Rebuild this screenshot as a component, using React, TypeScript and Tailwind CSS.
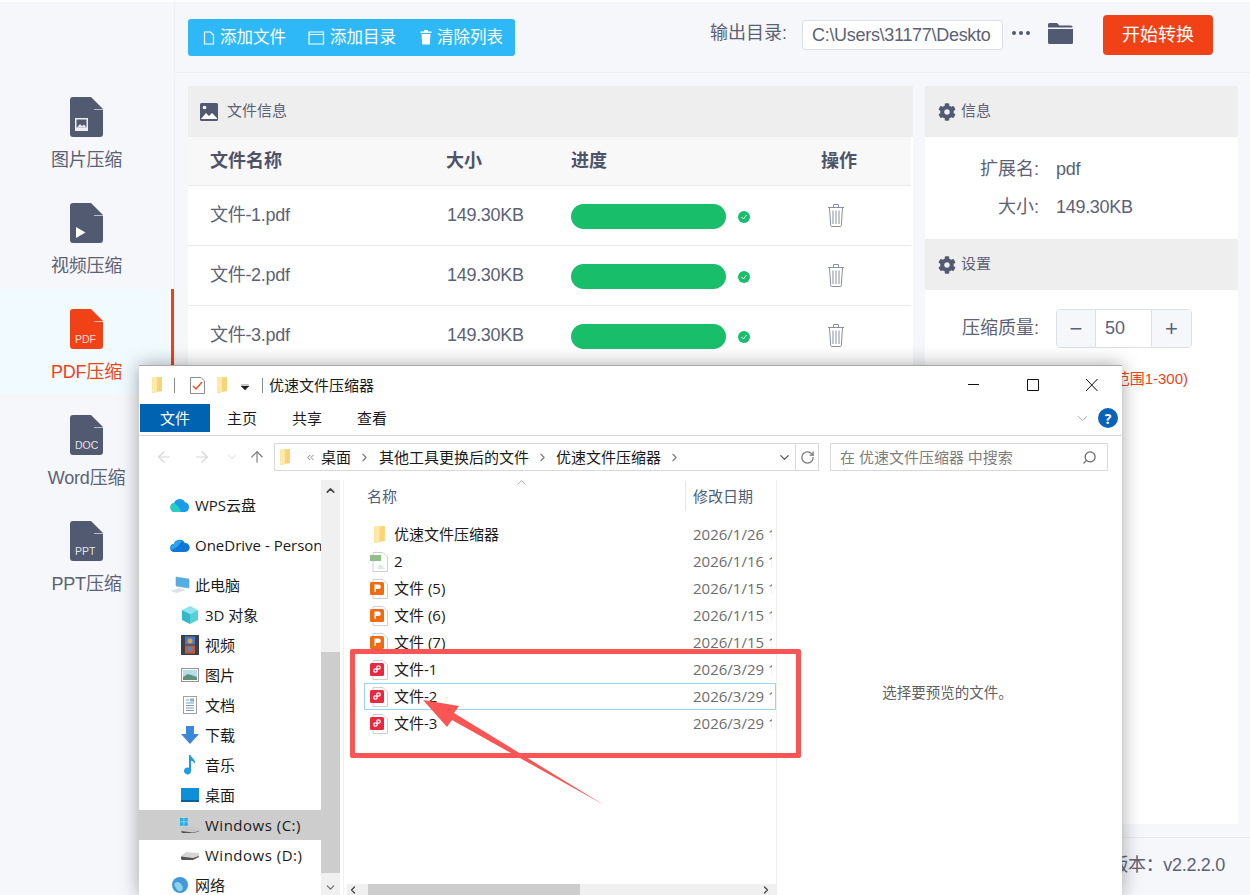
import React from 'react';
import { ArrowLeft, ArrowRight, ArrowUp, ChevronDown, ChevronLeft, ChevronRight, ChevronUp, ChevronsLeft, RotateCw, Search } from 'lucide-react';
import { FaCog } from 'react-icons/fa';

const APP_FONT = 'font-["Liberation_Sans","Noto_Sans_CJK_SC",sans-serif]';
const WIN_FONT = 'font-["Open_Sans","Noto_Sans_CJK_SC",sans-serif]';

function FileShape({ color, children }: { color: string; children?: React.ReactNode }) {
  return (
    <svg width="36" height="40" viewBox="0 0 36 40">
      <path
        d="M5 0H23L35 12V37a3 3 0 0 1-3 3H5a3 3 0 0 1-3-3V3a3 3 0 0 1 3-3Z"
        fill={color}
      />
      <path d="M26 12.5H35" stroke="#fff" strokeOpacity="0.6" strokeWidth="1" />
      {children}
    </svg>
  );
}

function SideLabelIcon({ label, color }: { label: string; color: string }) {
  return (
    <FileShape color={color}>
      <text x="7" y="34" fontSize="10.5" fill="#fff" fillOpacity="0.85" fontFamily="Liberation Sans, sans-serif">
        {label}
      </text>
    </FileShape>
  );
}

const sideItems = [
  {
    name: '图片压缩',
    icon: (
      <FileShape color="#525a72">
        <rect x="7" y="21" width="13" height="13" fill="#fff" fillOpacity="0.9" />
        <rect x="8.500" y="22.500" width="10" height="8" fill="#525a72" />
        <path d="M9 30.500l3-3.500 2 2 2-1.500 2.500 3Z" fill="#fff" fillOpacity="0.85" />
      </FileShape>
    ),
  },
  {
    name: '视频压缩',
    icon: (
      <FileShape color="#525a72">
        <path d="M8 24L17.5 29.5L8 35Z" fill="#fff" />
      </FileShape>
    ),
  },
  { name: 'PDF压缩', active: true, icon: <SideLabelIcon label="PDF" color="#f14217" /> },
  { name: 'Word压缩', icon: <SideLabelIcon label="DOC" color="#525a72" /> },
  { name: 'PPT压缩', icon: <SideLabelIcon label="PPT" color="#525a72" /> },
];

function Sidebar() {
  return (
    <div className="w-[175px] shrink-0 border-r border-[#eef0f3] pt-[75px]">
      {sideItems.map((item) => (
        <div
          key={item.name}
          className={`h-[106px] pt-[20px] flex flex-col items-center ${
            item.active ? 'bg-[#f0faff] border-r-[3px] border-[#f14217] text-[#f14217]' : 'text-[#5b6277] pr-[3px]'
          }`}
        >
          {item.icon}
          <span className="text-[18px] leading-[24px] mt-[11px] ml-[2px] tracking-[-0.2px]">{item.name}</span>
        </div>
      ))}
    </div>
  );
}

function TopBar() {
  return (
    <div className="h-[71px] border-b border-[#eceef1] flex items-center pl-[13px] pr-[37px] pb-[4px]">
      <div className="h-[37px] w-[327px] mt-[5px] bg-[#2fb8f8] rounded-[3px] text-white text-[16.5px] flex items-center pl-[15px]">
        <svg width="12" height="14" viewBox="0 0 12 14" fill="none" stroke="#fff" strokeWidth="1.2" className="mr-[5px]">
          <path d="M1.5 1h6l3 3v9h-9Z" />
        </svg>
        <span>添加文件</span>
        <svg width="17" height="14" viewBox="0 0 17 14" fill="none" stroke="#fff" strokeWidth="1.2" className="ml-[22px] mr-[5px]">
          <path d="M1 1h14.5v12H1ZM1 3.5h14.5" />
        </svg>
        <span>添加目录</span>
        <svg width="12" height="15" viewBox="0 0 12 15" fill="#fff" className="ml-[24px] mr-[5px]">
          <path d="M4 0h4v1.5h3.5v1.500h-11V1.5H4ZM1.5 4h9l-.7 10.500H2.200Z" />
        </svg>
        <span>清除列表</span>
      </div>
      <span className="ml-auto text-[18px] text-[#5b6277] mb-[3px]">输出目录:</span>
      <div className="ml-[15px] w-[201px] h-[30px] bg-white border border-[#dcdfe6] rounded-[3px] px-[9px] flex items-center text-[18px] tracking-[-0.3px] text-[#5b6277] overflow-hidden whitespace-nowrap">
        C:\Users\31177\Deskto
      </div>
      <span className="flex gap-[3px] ml-[9px] mb-[4px]">
        <i className="w-[4px] h-[4px] rounded-full bg-[#525a72]" />
        <i className="w-[4px] h-[4px] rounded-full bg-[#525a72]" />
        <i className="w-[4px] h-[4px] rounded-full bg-[#525a72]" />
      </span>
      <svg width="25" height="21" viewBox="0 0 25 21" className="ml-[18px] mb-[3px]">
        <path d="M0 1.5A1.5 1.5 0 0 1 1.5 0H9l2.5 2.5H23A1.5 1.5 0 0 1 24.5 4v.5H0Z" fill="#525a72" />
        <path d="M0 6h25v13.5a1.5 1.5 0 0 1-1.5 1.5h-22A1.5 1.5 0 0 1 0 19.5Z" fill="#525a72" />
      </svg>
      <div className="ml-[30px] w-[110px] h-[40px] bg-[#f14217] rounded-[4px] text-white text-[18px] flex items-center justify-center">
        开始转换
      </div>
    </div>
  );
}

function PanelTitle({ icon, title }: { icon: React.ReactNode; title: string }) {
  return (
    <div className="h-[51px] bg-[#eeeeee] flex items-center pl-[13px] text-[15px] text-[#5b6277]">
      {icon}
      <span>{title}</span>
    </div>
  );
}

function TrashIcon() {
  return (
    <svg width="18" height="24" viewBox="0 0 18 24" fill="none" stroke="#8a90a2" strokeWidth="1">
      <path d="M1 4.5h16M6.5 4V1.5h5V4M2.5 5l1.2 17.5a1 1 0 0 0 1 1h8.6a1 1 0 0 0 1-1L15.500 5M6 7.500v13.500M9 7.500v13.500M12 7.500v13.500" />
    </svg>
  );
}

function FilePanel() {
  return (
    <div className="w-[725px] bg-white">
      <PanelTitle
        title="文件信息"
        icon={
          <svg width="18" height="18" viewBox="0 0 18 18" className="mr-[9px] -ml-[1px]">
            <rect width="18" height="18" rx="1.500" fill="#525a72" />
            <circle cx="4.500" cy="4.500" r="1.800" fill="#fff" />
            <path d="M1 16l5-6 3 3 3-3 5 5v1Z" fill="#fff" />
          </svg>
        }
      />
      <div className="w-[723px]">
        <div className="h-[49px] bg-[#f8f8f9] border-b border-[#e8eaec] flex items-center text-[18px] font-bold text-[#4d5368] pl-[22px]">
          <span className="w-[236px]">文件名称</span>
          <span className="w-[125px]">大小</span>
          <span className="w-[250px]">进度</span>
          <span>操作</span>
        </div>
        {['文件-1.pdf', '文件-2.pdf', '文件-3.pdf'].map((name) => (
          <div key={name} className="h-[60px] border-b border-[#e8eaec] flex items-center text-[18px] tracking-[-0.3px] text-[#5b6277] pl-[22px]">
            <span className="w-[236px]">{name}</span>
            <span className="w-[125px] pl-px">149.30KB</span>
            <span className="w-[155px] h-[25px] rounded-full bg-[#19be6b] mt-[2px]" />
            <span className="w-[12px] h-[12px] ml-[12px] mt-[2px] rounded-full bg-[#19be6b] flex items-center justify-center">
              <svg width="8" height="8" viewBox="0 0 8 8" fill="none" stroke="#fff" strokeWidth="1">
                <path d="M1.500 4l2 2 3-4" />
              </svg>
            </span>
            <span className="ml-[77px] -mt-[2px]">
              <TrashIcon />
            </span>
          </div>
        ))}
      </div>
    </div>
  );
}

function InfoPanel() {
  return (
    <div className="w-[313px] bg-white text-[18px] text-[#5b6277]">
      <PanelTitle title="信息" icon={<FaCog className="text-[#525a72] text-[18px] mr-[5px]" />} />
      <div className="h-[102px] pt-[13px]">
        <div className="flex h-[38px] items-center">
          <span className="w-[114px] text-right">扩展名:</span>
          <span className="ml-[17px] tracking-[-0.3px]">pdf</span>
        </div>
        <div className="flex h-[38px] items-center">
          <span className="w-[114px] text-right">大小:</span>
          <span className="ml-[17px] tracking-[-0.3px]">149.30KB</span>
        </div>
      </div>
      <PanelTitle title="设置" icon={<FaCog className="text-[#525a72] text-[18px] mr-[5px]" />} />
      <div className="h-[534px] pt-[19px]">
        <div className="flex items-center">
          <span className="w-[114px] text-right">压缩质量:</span>
          <div className="ml-[17px] w-[136px] h-[39px] border border-[#dcdfe6] rounded-[4px] flex overflow-hidden">
            <span className="w-[39px] bg-[#f5f7fa] border-r border-[#dcdfe6] flex items-center justify-center text-[22px] leading-none">−</span>
            <span className="flex-1 pl-[9px] flex items-center">50</span>
            <span className="w-[40px] bg-[#f5f7fa] border-l border-[#dcdfe6] flex items-center justify-center text-[22px] leading-none">+</span>
          </div>
        </div>
        <div className="text-[15px] text-[#f14217] text-right pr-[50px] mt-[20px]">(范围1-300)</div>
      </div>
    </div>
  );
}

function Folder({ w = 12, h = 16 }: { w?: number; h?: number }) {
  return (
    <svg width={w} height={h} viewBox="0 0 12 16">
      <path d="M1 0h10v13.500L1 16Z" fill="#ffe29c" />
      <path d="M1 1.500L11 0v14L1 16Z" fill="#f8d477" />
      <path d="M1 0h5v15.200L1 16Z" fill="#fde9a8" />
    </svg>
  );
}

function DocBase({ children }: { children: React.ReactNode }) {
  return (
    <svg width="18" height="20" viewBox="0 0 18 20">
      <path d="M3 .5H13L17.500 5V19.500H3Z" fill="#fff" stroke="#cfcfcf" />
      {children}
    </svg>
  );
}

function PptIcon() {
  return (
    <DocBase>
      <rect x="0" y="3" width="14" height="13" rx="1.500" fill="#ef6c13" />
      <path d="M4.500 5.500h4a2.300 2.300 0 0 1 0 4.600H6v2.900H4.500Z" fill="#fff" />
    </DocBase>
  );
}

function RedIcon() {
  return (
    <DocBase>
      <rect x="0" y="3" width="14" height="13" rx="1.500" fill="#e8283f" />
      <circle cx="8.500" cy="7.500" r="1.700" fill="none" stroke="#fff" strokeWidth="1.300" />
      <circle cx="5.500" cy="10.500" r="1.700" fill="none" stroke="#fff" strokeWidth="1.300" />
    </DocBase>
  );
}

function PngIcon() {
  return (
    <DocBase>
      <rect x="0" y="3" width="11" height="6" fill="#8fbf86" />
      <path d="M7 17l3-5 5 5Z" fill="#dcebd8" />
    </DocBase>
  );
}

const files = [
  { name: '优速文件压缩器', date: '2026/1/26 1', icon: <span className="pl-[3px] block"><Folder w={13} h={17} /></span> },
  { name: '2', date: '2026/1/16 1', icon: <PngIcon /> },
  { name: '文件 (5)', date: '2026/1/15 1', icon: <PptIcon /> },
  { name: '文件 (6)', date: '2026/1/15 1', icon: <PptIcon /> },
  { name: '文件 (7)', date: '2026/1/15 1', icon: <PptIcon /> },
  { name: '文件-1', date: '2026/3/29 1', icon: <RedIcon /> },
  { name: '文件-2', date: '2026/3/29 1', icon: <RedIcon />, selected: true },
  { name: '文件-3', date: '2026/3/29 1', icon: <RedIcon /> },
];

const navIcons: Record<string, React.ReactNode> = {
  wps: (
    <svg width="20" height="14" viewBox="0 0 20 14">
      <path d="M5 14a4.500 4.500 0 0 1-1-8.900A6 6 0 0 1 15 4.200 5 5 0 0 1 15 14Z" fill="#1c9be8" />
      <path d="M5 14a4.500 4.500 0 0 1-1-8.900C6 6 9 9 11 14Z" fill="#27cfc0" />
    </svg>
  ),
  onedrive: (
    <svg width="20" height="13" viewBox="0 0 20 13">
      <path d="M4.500 13a4 4 0 0 1-.7-8A6 6 0 0 1 14.800 4 4.500 4.500 0 0 1 15.500 13Z" fill="#0f78d4" />
      <path d="M3.800 5A6 6 0 0 1 12 2L7 8 1.500 11A4 4 0 0 1 3.800 5Z" fill="#28a8ea" />
    </svg>
  ),
  pc: (
    <svg width="20" height="18" viewBox="0 0 20 18">
      <path d="M6 1l13 2v9L6 10Z" fill="#4fb0e8" stroke="#7f9fb4" strokeWidth="0.600" />
      <path d="M0 15l9-3 7 2-9 3Z" fill="#dfe3e6" />
    </svg>
  ),
  cube: (
    <svg width="18" height="18" viewBox="0 0 18 18">
      <path d="M9 0l8 4-8 4-8-4Z" fill="#8fe3ee" />
      <path d="M1 4l8 4v10l-8-4Z" fill="#2fb9c9" />
      <path d="M17 4L9 8v10l8-4Z" fill="#57cfdb" />
    </svg>
  ),
  film: (
    <svg width="18" height="20" viewBox="0 0 18 20">
      <rect width="18" height="20" fill="#3c4048" />
      <rect x="4" y="1.500" width="10" height="8" fill="#4a78c8" />
      <rect x="4" y="10.500" width="10" height="8" fill="#c7583a" />
      <circle cx="9" cy="6" r="2.500" fill="#e2a23a" />
      <circle cx="9" cy="14" r="2.500" fill="#4a8ec8" />
    </svg>
  ),
  picture: (
    <svg width="18" height="14" viewBox="0 0 18 14">
      <rect x="0.500" y="0.500" width="17" height="13" fill="#fff" stroke="#8f959b" />
      <rect x="2" y="2" width="14" height="10" fill="#b6dcea" />
      <path d="M2 9l5-3 9 3v3H2Z" fill="#5f9079" />
    </svg>
  ),
  doc: (
    <svg width="14" height="18" viewBox="0 0 14 18" fill="none">
      <rect x="0.500" y="0.500" width="13" height="17" fill="#fff" stroke="#9aa0a6" />
      <path d="M3 4h3M3 7h8M3 9.500h8M3 12h8M3 14.500h8" stroke="#7d99b3" />
      <rect x="7" y="2.500" width="4" height="3" fill="#7db2d6" />
    </svg>
  ),
  download: (
    <svg width="18" height="18" viewBox="0 0 18 18">
      <path d="M5 0h8v8h5l-9 10L0 8h5Z" fill="#3a86d8" />
    </svg>
  ),
  music: (
    <svg width="12" height="20" viewBox="0 0 12 20">
      <path d="M5 0h1.600c.4 3 5.400 4 4.400 9C10 6.500 8 6 7 5.800V16a3.500 3.500 0 1 1-2-3.200Z" fill="#1e9be8" />
    </svg>
  ),
  desktop: (
    <svg width="18" height="14" viewBox="0 0 18 14">
      <rect width="18" height="14" fill="#0f8fd8" />
      <rect y="12" width="18" height="2" fill="#0a5f9c" />
    </svg>
  ),
  cdrive: (
    <svg width="20" height="15" viewBox="0 0 20 15">
      <path d="M0 0h3.500v3.500H0ZM4.300 0h3.500v3.500H4.300ZM0 4.300h3.500v3.500H0ZM4.300 4.300h3.500v3.500H4.300Z" fill="#17b3f0" />
      <path d="M1 11l5-2 13 1v3l-6 2H3l-2-1Z" fill="#c7c7c7" />
      <path d="M1 13l12 1.500 6-1.500v.5l-6 1.500H2Z" fill="#555" />
    </svg>
  ),
  ddrive: (
    <svg width="20" height="9" viewBox="0 0 20 9">
      <path d="M1 5l5-4 13 1v3l-6 3H3l-2-1Z" fill="#d5d5d5" />
      <path d="M1 5.500l12 1.500 6-2v1l-6 3H2l-1-1Z" fill="#555" />
    </svg>
  ),
  net: (
    <svg width="20" height="18" viewBox="0 0 20 18">
      <circle cx="10" cy="9" r="8" fill="#3f9ad6" />
      <path d="M4 8c3-3 5-2 7 0s3 5 0 7-6-4-7-7Z" fill="#8fd0ea" />
    </svg>
  ),
};

const navRows = [
  { label: 'WPS云盘', icon: 'wps', gap: true },
  { label: 'OneDrive - Personal', icon: 'onedrive', gap: true },
  { label: '此电脑', icon: 'pc' },
  { label: '3D 对象', icon: 'cube', sub: true },
  { label: '视频', icon: 'film', sub: true },
  { label: '图片', icon: 'picture', sub: true },
  { label: '文档', icon: 'doc', sub: true },
  { label: '下载', icon: 'download', sub: true },
  { label: '音乐', icon: 'music', sub: true },
  { label: '桌面', icon: 'desktop', sub: true },
  { label: 'Windows (C:)', icon: 'cdrive', sub: true, selected: true, wide: true },
  { label: 'Windows (D:)', icon: 'ddrive', sub: true, wide: true },
  { label: '网络', icon: 'net' },
];

function ExplorerWindow() {
  return (
    <div className={`absolute left-[139px] top-[363px] w-[983px] h-[530px] bg-white border-t border-[#a8a8a8] shadow-[0_0_18px_rgba(0,0,0,0.35)] flex flex-col text-[15px] text-[#1a1a1a] ${WIN_FONT}`}>
      {/* title row */}
      <div className="h-[38px] flex items-center pl-[12px] shrink-0">
        <Folder />
        <i className="w-px h-[15px] bg-[#8a8a8a] ml-[11px]" />
        <svg width="15" height="17" viewBox="0 0 15 17" fill="none" className="ml-[15px]">
          <path d="M.5.500H11L14.500 4V16.500H.5Z" fill="#fff" stroke="#8c8c8c" />
          <path d="M3 9l3 3 6-7" stroke="#e8501e" strokeWidth="1.400" />
        </svg>
        <span className="ml-[11px]"><Folder /></span>
        <svg width="8" height="6" viewBox="0 0 8 6" className="ml-[13px] mt-[3px]">
          <path d="M0 0h8M0 2h8L4 6Z" fill="#222" stroke="#222" strokeWidth="0.500" />
        </svg>
        <i className="w-px h-[15px] bg-[#8a8a8a] ml-[13px]" />
        <span className="ml-[6px]">优速文件压缩器</span>
        <svg width="154" height="14" viewBox="0 0 154 14" fill="none" stroke="#111" className="ml-auto">
          <path d="M0 6.500h11M59.500 1.500h11v11h-11ZM118 1l11.500 12M129.500 1L118 13" />
        </svg>
      </div>
      {/* ribbon tabs */}
      <div className="h-[28px] flex items-center shrink-0 pl-[1px]">
        <div className="w-[70px] h-[28px] bg-[#0063b1] text-white flex items-center justify-center">文件</div>
        <span className="ml-[17px]">主页</span>
        <span className="ml-[35px]">共享</span>
        <span className="ml-[35px]">查看</span>
        <ChevronDown size={17} strokeWidth={1} className="ml-auto text-[#8f8f8f]" />
        <span className="ml-[7px] mr-[4px] w-[20px] h-[20px] rounded-full bg-[#0a63b8] text-white text-[14px] font-bold flex items-center justify-center">?</span>
      </div>
      <div className="h-px bg-[#d9d9d9] mt-[3px] shrink-0" />
      {/* address row */}
      <div className="h-[28px] mt-[7px] shrink-0 flex items-center">
        <ArrowLeft size={18} strokeWidth={1.500} className="ml-[16px] text-[#d5d5d5]" />
        <ArrowRight size={18} strokeWidth={1.500} className="ml-[20px] text-[#d5d5d5]" />
        <ChevronDown size={12} strokeWidth={1.500} className="ml-[15px] text-[#c8c8c8]" />
        <ArrowUp size={18} strokeWidth={1.500} className="ml-[10px] text-[#7a7a7a]" />
        <div className="ml-[8px] w-[545px] h-[28px] border border-[#d9d9d9] flex items-center pl-[4px]">
          <Folder />
          <ChevronsLeft size={11} className="ml-[14px] text-[#777]" />
          <span className="ml-[5px]">桌面</span>
          <ChevronRight size={13} className="ml-[7px] text-[#777]" />
          <span className="ml-[8px]">其他工具更换后的文件</span>
          <ChevronRight size={13} className="ml-[7px] text-[#777]" />
          <span className="ml-[7px]">优速文件压缩器</span>
          <ChevronRight size={13} className="ml-[7px] text-[#777]" />
          <ChevronDown size={15} className="ml-auto mr-[3px] text-[#555]" />
          <span className="w-[23px] h-full border-l border-[#d9d9d9] flex items-center justify-center">
            <RotateCw size={15} className="text-[#777]" />
          </span>
        </div>
        <div className="ml-[11px] w-[278px] h-[28px] border border-[#d9d9d9] flex items-center pl-[9px] text-[#7d7d7d]">
          在 优速文件压缩器 中搜索
          <Search size={15} className="ml-auto mr-[10px] -scale-x-100 text-[#666]" />
        </div>
      </div>
      {/* body */}
      <div className="flex-1 flex min-h-0 mt-[9px]">
        <div className="w-[182px] shrink-0 pt-[10px] overflow-hidden">
          {navRows.map((r) => (
            <div
              key={r.label}
              className={`h-[30px] flex items-center whitespace-nowrap ${r.gap ? 'mb-[10px]' : ''} ${r.selected ? 'bg-[#cdcdcd]' : ''}`}
            >
              <span className={`w-[20px] flex justify-center shrink-0 ${r.sub ? 'ml-[41px]' : 'ml-[31px]'}`}>{navIcons[r.icon]}</span>
              <span className={`ml-[5px] ${r.wide ? 'tracking-[0.5px]' : ''}`}>{r.label}</span>
            </div>
          ))}
        </div>
        <div className="w-[19px] shrink-0 bg-[#f0f0f0] flex flex-col items-center">
          <ChevronUp size={13} strokeWidth={3} className="mt-[4px] text-[#444]" />
          <div className="w-full h-[221px] bg-[#cdcdcd] mt-[155px]" />
          <ChevronDown size={13} strokeWidth={2} className="mt-[8px] text-[#666]" />
        </div>
        <div className="w-[434px] shrink-0 ml-[3px] border-r border-[#eeeeee] border-l flex flex-col relative">
          <ChevronUp size={15} strokeWidth={1} className="absolute left-[170px] -top-[5px] text-[#777]" />
          <div className="h-[30px] flex text-[#4c607a] items-center shrink-0 mt-px">
            <span className="w-[341px] pl-[23px]">名称</span>
            <span className="h-[30px] border-l border-[#e5e5e5] pl-[7px] flex items-center">修改日期</span>
          </div>
          <div className="pt-[10px]">
            {files.map((f) => (
              <div
                key={f.name}
                className={`h-[27px] ml-[20px] w-[412px] flex items-center border ${f.selected ? 'border-[#99d1ff]' : 'border-transparent'}`}
              >
                <span className="w-[18px] ml-[5px] shrink-0 flex">{f.icon}</span>
                <span className="ml-[6px] w-[299px] shrink-0">{f.name}</span>
                <span className="text-[#6d6d6d] w-[79px] overflow-hidden whitespace-nowrap">{f.date}</span>
              </div>
            ))}
          </div>
          <div className="mt-auto ml-[3px] h-[11px] bg-[#f0f0f0] flex items-center shrink-0">
            <ChevronLeft size={12} strokeWidth={2.500} className="text-[#444]" />
            <div className="w-[212px] h-full bg-[#cdcdcd] ml-[9px]" />
            <ChevronRight size={12} strokeWidth={2.500} className="ml-auto mr-[4px] text-[#444]" />
          </div>
        </div>
        <div className="flex-1 flex items-center justify-center text-[14.5px] text-[#5f5f5f] pr-[4px] pt-[10px]">选择要预览的文件。</div>
      </div>
    </div>
  );
}

export default function App() {
  return (
    <div className={`relative w-[1250px] h-[895px] overflow-hidden bg-[#f5f7fa] border-t-2 border-white flex ${APP_FONT}`}>
      <Sidebar />
      <div className="flex-1 flex flex-col">
        <TopBar />
        <div className="flex gap-[12px] pl-[13px] pt-[13px]">
          <FilePanel />
          <InfoPanel />
        </div>
        <div className="mt-auto h-[58px] border-t border-[#e8eaec] flex items-center justify-end pr-[25px] text-[18px] tracking-[-0.3px] text-[#5b6277] pb-[2px]">
          版本：v2.2.2.0
        </div>
      </div>
      <ExplorerWindow />
      {/* red annotation */}
      <div className="absolute left-[350px] top-[647px] w-[451px] h-[109px] border-[5px] border-[#fa5555] rounded-[2px]" />
      <svg className="absolute left-0 top-[-2px]" width="1250" height="895" viewBox="0 0 1250 895">
        <path d="M423 700L459 706L454 713L604 805L452 720L447 727Z" fill="#fa5555" />
      </svg>
    </div>
  );
}
